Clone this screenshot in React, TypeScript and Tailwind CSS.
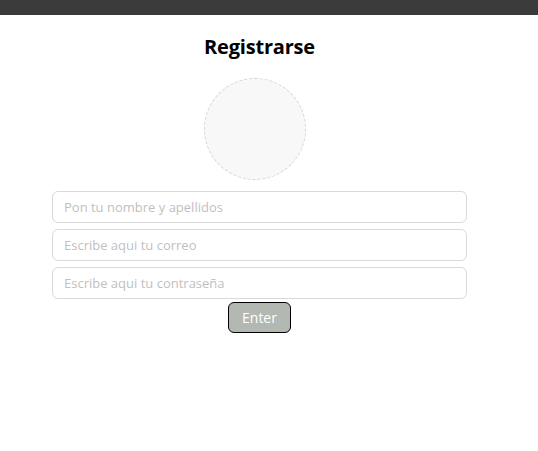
export default function App() {
  return (
    <div className="min-h-screen bg-white" style={{ fontFamily: '"Open Sans", "Noto Sans", sans-serif' }}>
      <div className="h-[15px] bg-[#3b3b3b]" />
      <div className="w-[519px] flex flex-col items-center">
        <h1 className="mt-[18px] text-[20px] font-bold leading-[28px] text-black tracking-[-0.2px]">Registrarse</h1>
        <div className="mt-[17px] mr-[10px] w-[102px] h-[102px] rounded-full border border-dashed border-[#d6d6d6] bg-[#f8f8f8]" />
        <form className="mt-[11px] w-[415px] flex flex-col gap-[6px] items-center">
          <input
            placeholder="Pon tu nombre y apellidos"
            className="w-full h-[32px] px-[11px] text-[13px] rounded-[6px] border border-[#d9d9d9] placeholder:text-[#bfbfbf] outline-none"
          />
          <input
            placeholder="Escribe aqui tu correo"
            className="w-full h-[32px] px-[11px] text-[13px] rounded-[6px] border border-[#d9d9d9] placeholder:text-[#bfbfbf] outline-none"
          />
          <input
            placeholder="Escribe aqui tu contraseña"
            className="w-full h-[32px] px-[11px] text-[13px] rounded-[6px] border border-[#d9d9d9] placeholder:text-[#bfbfbf] outline-none"
          />
        </form>
        <button className="mt-[3px] w-[63px] h-[31px] rounded-[6px] border border-black bg-[#b3b8b2] text-white text-[14px]">
          Enter
        </button>
      </div>
    </div>
  );
}
